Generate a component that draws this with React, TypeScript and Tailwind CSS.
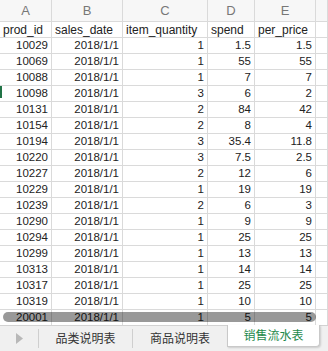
const rows: [string, string, string, string, string][] = [
  ["10029", "2018/1/1", "1", "1.5", "1.5"],
  ["10069", "2018/1/1", "1", "55", "55"],
  ["10088", "2018/1/1", "1", "7", "7"],
  ["10098", "2018/1/1", "3", "6", "2"],
  ["10131", "2018/1/1", "2", "84", "42"],
  ["10154", "2018/1/1", "2", "8", "4"],
  ["10194", "2018/1/1", "3", "35.4", "11.8"],
  ["10220", "2018/1/1", "3", "7.5", "2.5"],
  ["10227", "2018/1/1", "2", "12", "6"],
  ["10229", "2018/1/1", "1", "19", "19"],
  ["10239", "2018/1/1", "2", "6", "3"],
  ["10290", "2018/1/1", "1", "9", "9"],
  ["10294", "2018/1/1", "1", "25", "25"],
  ["10299", "2018/1/1", "1", "13", "13"],
  ["10313", "2018/1/1", "1", "14", "14"],
  ["10317", "2018/1/1", "1", "25", "25"],
  ["10319", "2018/1/1", "1", "10", "10"],
  ["20001", "2018/1/1", "1", "5", "5"],
];

const letters = ["A", "B", "C", "D", "E", ""];
const fields = ["prod_id", "sales_date", "item_quantity", "spend", "per_price", ""];
const cols = "grid grid-cols-[52px_71px_85px_47px_61px_1fr]";

export default function App() {
  return (
    <div
      className="w-[328px] h-[351px] flex flex-col bg-white overflow-hidden text-[#222]"
      style={{ fontFamily: '"Liberation Sans", "Noto Sans CJK SC", sans-serif' }}
    >
      <div className="relative h-[325px] overflow-hidden">
        <div className={`${cols} h-[22px] bg-[#f7f7f7]`}>
          {letters.map((l, i) => (
            <div
              key={i}
              className="border-r border-b border-[#dadada] flex items-center justify-center text-[13px] text-[#777]"
            >
              {l}
            </div>
          ))}
        </div>
        <div className={`${cols} h-4`}>
          {fields.map((f, i) => (
            <div
              key={i}
              className="border-r border-b border-[#dadada] flex items-center px-[3px] text-[12px] leading-none whitespace-nowrap overflow-hidden"
            >
              {f}
            </div>
          ))}
        </div>
        {rows.map((r) => (
          <div key={r[0]} className={`${cols} h-4`}>
            {[...r, ""].map((v, i) => (
              <div
                key={i}
                className="border-r border-b border-[#dadada] flex items-center justify-end px-[3px] text-[11.5px] leading-none"
              >
                {v}
              </div>
            ))}
          </div>
        ))}
        <div className="absolute left-0 top-[86px] w-[2px] h-[12px] bg-[#217346]" />
        <div className="absolute left-[3px] top-[312px] w-[313px] h-[10px] rounded-full bg-black/40" />
      </div>

      <div className="flex-1 flex bg-[#f0f0f0] border-t border-[#d2d2d2] text-[12px]">
        <div className="w-[39px] flex items-center justify-center border-r border-[#cfcfcf] my-[3px]">
          <svg width="7" height="11" viewBox="0 0 7 11">
            <path d="M0 0 L7 5.5 L0 11 Z" fill="#b8b8b8" />
          </svg>
        </div>
        <div className="w-[94px] flex items-center justify-center text-[#333] border-r border-[#cfcfcf] my-[3px]">
          品类说明表
        </div>
        <div className="w-[94px] flex items-center justify-center text-[#333]">
          商品说明表
        </div>
        <div className="w-[93px] h-[22px] -mt-px flex items-center justify-center bg-white text-[#1f8a4c] border-x border-b border-[#c9c9c9] rounded-br-[4px] shadow-[1px_1px_2px_rgba(0,0,0,0.15)]">
          销售流水表
        </div>
      </div>
    </div>
  );
}
